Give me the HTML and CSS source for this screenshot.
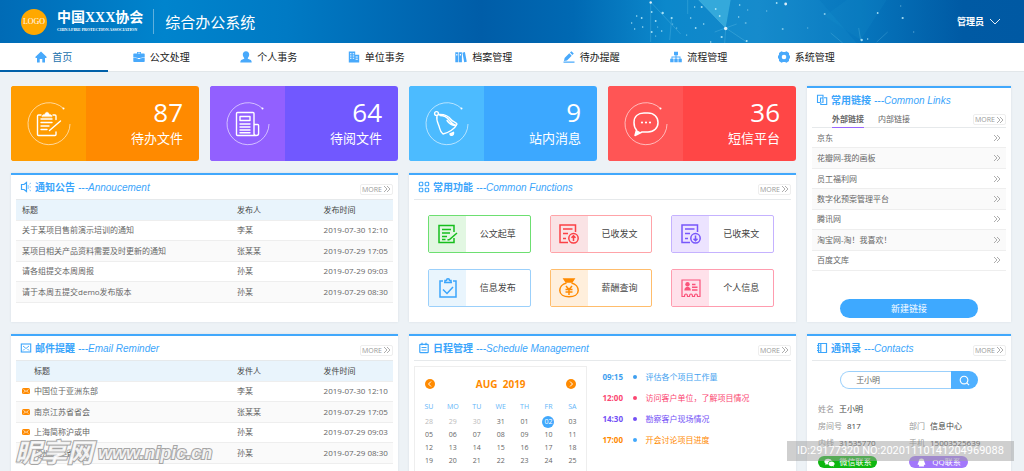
FILE: index.html
```html
<!DOCTYPE html>
<html lang="zh-CN">
<head>
<meta charset="utf-8">
<title>综合办公系统</title>
<link rel="stylesheet" href="styles.css">
</head>
<body>
<svg class="sprite" aria-hidden="true">
  <symbol id="more" viewBox="0 0 8 8"><path d="M1 1l3 3-3 3M4 1l3 3-3 3" fill="none" stroke="currentColor" stroke-width=".8"/></symbol>
  <symbol id="ring" viewBox="0 0 44 44"><path d="M36.500 6.500A21 21 0 1 0 43 22" fill="none" stroke="#fff" stroke-opacity=".75" stroke-width=".8"/><circle cx="36.500" cy="6.500" r="1" fill="#fff"/></symbol>
  <symbol id="mail" viewBox="0 0 8 6"><rect width="8" height="6" rx="1.500" fill="#ff8a00"/><path d="M1.500 1.500L4 3.500l2.500-2M1.500 4.700l1.300-1.200M6.500 4.700L5.200 3.500" fill="none" stroke="#fff" stroke-width=".7"/></symbol>
</svg>
<div class="app">
  <header class="top">
    <svg class="sky" viewBox="10 0 400 43" preserveAspectRatio="xMidYMid slice" aria-hidden="true">
      <path d="M84 0h32l-5 28z" fill="#4cc0e6" fill-opacity=".6"/>
      <path d="M116 0l-5 28 21 15h110L205 0z" fill="#29a3dc" fill-opacity=".12"/>
      <path d="M246 40l-36-24L232 0h40z" fill="#29a3dc" fill-opacity=".1"/>
      <g fill="none" stroke="#8fdcf6" stroke-opacity=".35" stroke-width=".6">
        <path d="M36 2l30 32M36 2v40M84 0l27 28M111 28l21 14M111 28l-1 15M111 28l11-4M111 28l-11 4M57 18l-2 22M216 33l12 10M246 40l-2-12M273 32l-11 10M73 0v14"/>
      </g>
      <g fill="#bfeefb" fill-opacity=".85">
        <circle cx="36" cy="2.500" r="1.200" fill="#fff"/><circle cx="37" cy="12" r=".9"/><circle cx="48" cy="13" r="1.200"/><circle cx="22" cy="16" r=".8"/><circle cx="27" cy="18" r=".9"/><circle cx="17" cy="23" r=".7"/><circle cx="5" cy="23" r=".7"/><circle cx="41" cy="21" r=".9"/><circle cx="28" cy="27" r=".8"/><circle cx="20" cy="29" r=".7"/><circle cx="37" cy="32" r="1"/><circle cx="43" cy="27" r=".5"/><circle cx="47" cy="31" r=".8"/><circle cx="41" cy="36" r=".6"/><circle cx="57" cy="18" r="1.100"/><circle cx="58" cy="24" r=".5"/><circle cx="62" cy="28" r=".6"/><circle cx="72" cy="35" r=".6"/><circle cx="76" cy="18" r=".8"/><circle cx="81" cy="28" r=".9"/><circle cx="80" cy="7" r=".7"/><circle cx="87" cy="7" r="1"/><circle cx="89" cy="24" r=".8"/><circle cx="101" cy="9" r=".9"/><circle cx="105" cy="16" r=".9"/><circle cx="111" cy="28.500" r="1.700" fill="#fff"/><circle cx="107" cy="37" r="1.100"/><circle cx="96" cy="42" r=".8"/><circle cx="125" cy="5" r=".8"/><circle cx="124" cy="17" r=".7"/><circle cx="133" cy="10" r=".7" opacity=".6"/><circle cx="131" cy="23" r="1" opacity=".5"/><circle cx="132" cy="41" r="1"/><circle cx="152" cy="11" r=".7" opacity=".6"/><circle cx="162" cy="3" r=".9"/><circle cx="171" cy="4" r="1.400" fill="#fff"/><circle cx="168" cy="29" r="1" opacity=".7"/><circle cx="193" cy="28" r=".7" opacity=".5"/><circle cx="210" cy="14" r="1" opacity=".8"/><circle cx="247" cy="40" r="1.200"/><circle cx="253" cy="39" r=".7"/><circle cx="263" cy="13" r=".9"/><circle cx="286" cy="6" r=".7" opacity=".5"/><circle cx="288" cy="18" r="1.100"/><circle cx="299" cy="32" r=".7" opacity=".5"/>
      </g>
    </svg>
    <div class="brand">
      <span class="logo">LOGO</span>
      <div class="org"><strong>中国XXX协会</strong><small>CHINA FIRE PROTECTION ASSOCIATION</small></div>
      <h1>综合办公系统</h1>
    </div>
    <button class="user" type="button">管理员
      <svg width="12" height="7" viewBox="0 0 12 7"><path d="M1 1l5 5 5-5" fill="none" stroke="#fff" stroke-width=".9"/></svg>
    </button>
  </header>

  <nav class="nav">
    <a class="on" href="#"><svg viewBox="0 0 12 12"><path d="M6 .5L.5 5.800V7H2v4.500h2.700V8h2.600v3.500H10V7h1.500V5.800z"/></svg>首页</a>
    <a href="#"><svg viewBox="0 0 12 12"><path d="M4 2.500V1h4v1.500h3q.7 0 .7.700V6L7 7H5L.3 6V3.200q0-.7.7-.7zM4.800 2.500h2.400v-.8H4.800zM.3 6.600L5 7.600v.5h2v-.5l4.700-1v3.600q0 .8-.7.800H1q-.7 0-.7-.8z"/></svg>公文处理</a>
    <a href="#"><svg viewBox="0 0 12 12"><path d="M6 .3c2 0 3.200 1.400 3.200 3.200 0 1.500-.7 2.800-1.400 3.500v.7l3 1.300q.9.500.9 2.500H.3q0-2 .9-2.500l3-1.300V7C3.500 6.300 2.800 5 2.800 3.500 2.800 1.700 4 .3 6 .3z"/></svg>个人事务</a>
    <a href="#"><svg viewBox="0 0 12 12"><path fill-rule="evenodd" d="M.8.500h6.400v3.300h4v7.700H.8zM2 2.300v1h1.500v-1zM4.700 2.300v1h1.500v-1zM2 4.500v1h1.500v-1zM4.700 4.500v1h1.500v-1zM2 6.700v1h1.500v-1zM4.700 6.700v1h1.500v-1zM7.600 5.500v1h2.200v-1zM7.600 7.700v1h2.200v-1z"/></svg>单位事务</a>
    <a href="#"><svg viewBox="0 0 12 12"><path fill-rule="evenodd" d="M.3 1.200h3v10h-3zM1.200 3h1.200v1.500H1.200zM3.900 1.200h3v10h-3zM4.800 3H6v1.500H4.800zM7.400 1.700l2.500-.6 1.900 9.600-2.600.5z"/></svg>档案管理</a>
    <a href="#"><svg viewBox="0 0 12 12"><path d="M1 10l.6-3 4.700-4.700 2.400 2.400L4 9.400zM7 1.600L8.400.300 10.800 2.600 9.400 4zM.5 10.500h11v1.300H.5z"/></svg>待办提醒</a>
    <a href="#"><svg viewBox="0 0 12 12"><path d="M4 .8h4v3.400H6.500v1.300h4v2.300h1.300v3.400H8.400V7.800h1.200V6.400H6.500v1.400h1.200v3.400H4.300V7.800h1.200V6.400H2.400v1.400h1.200v3.400H.2V7.800h1.300V5.500h4V4.200H4z"/></svg>流程管理</a>
    <a href="#"><svg viewBox="0 0 12 12"><path fill-rule="evenodd" d="M3.500.3L5 1h2L8.500.300 11 2v1.800L12 5v2l-1 1.200V10L8.500 11.700 7 11H5l-1.500.7L1 10V8.200L0 7V5l1-1.200V2zM6 3.700a2.300 2.300 0 1 0 0 4.600 2.300 2.300 0 0 0 0-4.600z"/></svg>系统管理</a>
  </nav>

  <main class="board">
    <a class="stat orange" href="#">
      <span class="pic"><svg viewBox="0 0 44 44"><use href="#ring"/><g fill="none" stroke="#fff" stroke-width="1.400" stroke-linecap="round" stroke-linejoin="round"><path d="M14 13h-2.500q-1 0-1 1v18.500q0 1 1 1h16.500q1 0 1-1V30M29 17.500V14q0-1-1-1h-2M14 17h11M14 20.500h11M14 24h8M14 27.500h6M33.500 19l-11 9.500"/><path d="M15 14.500c0-2 2-2 3-2 0-3 4-3 4 0 1 0 3 0 3 2z" fill="#fff" stroke-width=".5"/></g></svg></span>
      <span class="num"><b>87</b>待办文件</span>
    </a>
    <a class="stat purple" href="#">
      <span class="pic"><svg viewBox="0 0 44 44"><use href="#ring"/><g fill="none" stroke="#fff" stroke-width="1.400" stroke-linejoin="round" stroke-linecap="round"><path d="M30 33.500H11.500q-1 0-1-1v-21q0-1 1-1h15.500q1 0 1 1v20q0 2 2.300 2t2.300-2v-8q0-1-1-1H28M14 14.500h10v4H14zM14 22h10M14 25h10M14 28h10M14 30.700h10"/></g></svg></span>
      <span class="num"><b>64</b>待阅文件</span>
    </a>
    <a class="stat blue" href="#">
      <span class="pic"><svg viewBox="0 0 44 44"><use href="#ring"/><g fill="none" stroke="#fff" stroke-width="1.400" stroke-linejoin="round" stroke-linecap="round"><circle cx="11.500" cy="11.500" r="1.900"/><path d="M12 14c-1 4 1 7 2 10 1 3 1 6 4 8 5-1 12-5 14-10-1-2-4-2-5.500-4-3-4-6-6-13-5.500"/><path d="M15 13.500c6 0 8 3 9.500 5 2 3 4 4 6.500 5-4 0-7-2-9-5"/><path d="M25 32l3.500-1.700q.3 2.500-1.500 3-1.700.200-2-1.300z" fill="#fff"/></g></svg></span>
      <span class="num"><b>9</b>站内消息</span>
    </a>
    <a class="stat red" href="#">
      <span class="pic"><svg viewBox="0 0 44 44"><use href="#ring"/><path d="M12.500 28c-2-2-2.500-4-2.500-7.500 0-6 4-9.500 10-9.500h4c6 0 10 4 10 9.500S30 30 24 30h-6l-7 3.500z" fill="none" stroke="#fff" stroke-width="1.500" stroke-linejoin="round"/><path d="M11 33.500l1.500-5.500 4.500 2.500z" fill="#fff"/><g fill="#fff"><circle cx="18" cy="20.500" r="1.100"/><circle cx="22" cy="20.500" r="1.100"/><circle cx="26" cy="20.500" r="1.100"/></g></svg></span>
      <span class="num"><b>36</b>短信平台</span>
    </a>

    <section class="panel links">
      <div class="title"><svg viewBox="0 0 12 12"><g fill="none" stroke="currentColor" stroke-width="1.100"><path d="M4 8.500H1.500V1.200h5.500v2.600M4.500 8.500V4H7v4.300H5.500"/><path d="M8 3.800h2.700v6.700H4.800V8.700"/></g></svg><h2>常用链接</h2><i>---Common Links</i></div>
      <div class="tabs"><button class="on" type="button">外部链接</button><button type="button">内部链接</button><a class="more" href="#">MORE <svg><use href="#more"/></svg></a></div>
      <ul>
        <li><a href="#">京东<svg><use href="#more"/></svg></a></li>
        <li><a href="#">花瓣网-我的画板<svg><use href="#more"/></svg></a></li>
        <li><a href="#">员工福利网<svg><use href="#more"/></svg></a></li>
        <li><a href="#">数字化预案管理平台<svg><use href="#more"/></svg></a></li>
        <li><a href="#">腾讯网<svg><use href="#more"/></svg></a></li>
        <li><a href="#">淘宝网-淘！我喜欢！<svg><use href="#more"/></svg></a></li>
        <li><a href="#">百度文库<svg><use href="#more"/></svg></a></li>
      </ul>
      <button class="create" type="button">新建链接</button>
    </section>

    <section class="panel wide">
      <div class="title ruled"><svg viewBox="0 0 12 12"><g fill="none" stroke="currentColor" stroke-width="1.200"><path d="M6.500 1.500L4 3.500H1.500v5H4l2.500 2z"/><path d="M8.200 4v4M9.500 3l1.500-1M9.500 6H11M9.500 9l1.500 1" stroke-width=".6"/></g></svg><h2>通知公告</h2><i>---Annoucement</i><a class="more" href="#">MORE <svg><use href="#more"/></svg></a></div>
      <table class="list">
        <thead><tr><th>标题</th><th>发布人</th><th>发布时间</th></tr></thead>
        <tbody>
          <tr><td>关于某项目售前演示培训的通知</td><td>李某</td><td>2019-07-30 12:10</td></tr>
          <tr><td>某项目相关产品资料需要及时更新的通知</td><td>张某某</td><td>2019-07-29 17:05</td></tr>
          <tr><td>请各组提交本周周报</td><td>孙某</td><td>2019-07-29 09:03</td></tr>
          <tr><td>请于本周五提交demo发布版本</td><td>孙某</td><td>2019-07-29 08:30</td></tr>
        </tbody>
      </table>
    </section>

    <section class="panel wide">
      <div class="title ruled"><svg viewBox="0 0 12 12"><g fill="none" stroke="currentColor" stroke-width="1.100"><rect x="1.300" y="1.300" width="3.500" height="3.500" rx=".8"/><rect x="7.200" y="1.300" width="3.500" height="3.500" rx=".8"/><rect x="1.300" y="7.200" width="3.500" height="3.500" rx=".8"/><rect x="7.200" y="7.200" width="3.500" height="3.500" rx=".8"/></g></svg><h2>常用功能</h2><i>---Common Functions</i><a class="more" href="#">MORE <svg><use href="#more"/></svg></a></div>
      <div class="tools">
        <button class="green" type="button"><span><svg viewBox="0 0 20 20"><path d="M16 8V1.500H1v17h15V14M4 5.500h9M4 9h8M4 12.500h5M4 15.500h3.500M19 9l-7.500 6.500-2 .5"/></svg></span>公文起草</button>
        <button class="rose" type="button"><span><svg viewBox="0 0 20 20"><path d="M16.500 8V1H1v17.500h8M4 5h9.500M4 9.500h5M4 14.500h3"/><circle cx="14.500" cy="14.300" r="4.700"/><path d="M14.500 17v-5M12.500 13.800l2-2 2 2"/></svg></span>已收发文</button>
        <button class="violet" type="button"><span><svg viewBox="0 0 20 20"><path d="M16.500 8V1H1v17.500h8M4 5h9.500M4 9.500h5M4 14.500h3"/><circle cx="14.500" cy="14.300" r="4.700"/><path d="M14.500 11.500v5M12.500 14.800l2 2 2-2"/></svg></span>已收来文</button>
        <button class="azure" type="button"><span><svg viewBox="0 0 20 20"><path d="M5 3H2v16h16V3h-3M6 4.500h8M5 11.500l4 4 6-6.500"/><path d="M7 4V2.500h1.500c0-2.300 3-2.300 3 0H13V4"/></svg></span>信息发布</button>
        <button class="amber" type="button"><span><svg viewBox="0 0 20 20"><path d="M7.500 5C3 6 .8 9.500.8 12.500c0 4 4 6.300 9.200 6.300s9.200-2.300 9.200-6.300c0-3-2.200-6.500-6.700-7.500"/><path d="M5 1h10l-2 3H7z" fill="currentColor"/><path d="M7 8l3 3.500L13 8M6.500 11.500h7M6.500 14h7M10 11.500V17"/></svg></span>薪酬查询</button>
        <button class="pink" type="button"><span><svg viewBox="0 0 20 20"><path d="M1 18.500V2h18v16.500h-2.500q0-2.500-1.500-2.500t-1.500 2.500h-2q0-2.500-1.500-2.500t-1.500 2.500h-2q0-2.500-1.500-2.500t-1.500 2.500z" stroke-width="1.200"/><circle cx="6.500" cy="6.300" r="2.200" fill="currentColor" stroke="none"/><path d="M3.300 12.500c0-5 6.500-5 6.500 0z" fill="currentColor" stroke="none"/><path d="M11 6.500h3.500M11 9.200h5.500M11 12h5.500"/></svg></span>个人信息</button>
      </div>
    </section>

    <section class="panel wide">
      <div class="title ruled"><svg viewBox="0 0 12 12"><g fill="none" stroke="currentColor" stroke-width="1.100"><rect x="1.300" y="2" width="9.400" height="8"/><path d="M3 4l3 2.500L9 4M3 8.500l1.500-1.500M9 8.500L7.500 7" stroke-width=".9"/></g></svg><h2>邮件提醒</h2><i>---Email Reminder</i><a class="more" href="#">MORE <svg><use href="#more"/></svg></a></div>
      <table class="list mails">
        <thead><tr><th>标题</th><th>发件人</th><th>发件时间</th></tr></thead>
        <tbody>
          <tr><td><svg><use href="#mail"/></svg>中国位于亚洲东部</td><td>李某</td><td>2019-07-30 12:10</td></tr>
          <tr><td><svg><use href="#mail"/></svg>南京江苏省省会</td><td>张某某</td><td>2019-07-29 17:05</td></tr>
          <tr><td><svg><use href="#mail"/></svg>上海简称沪或申</td><td>孙某</td><td>2019-07-29 09:03</td></tr>
          <tr><td><svg><use href="#mail"/></svg>杭州浙江省省会</td><td>孙某</td><td>2019-07-29 08:30</td></tr>
        </tbody>
      </table>
    </section>

    <section class="panel wide">
      <div class="title ruled"><svg viewBox="0 0 12 12"><g fill="none" stroke="currentColor" stroke-width="1.200"><rect x="1.800" y="2.300" width="8.400" height="8.400" rx=".8"/><path d="M4 .8v2.500M8 .8v2.500M3.500 5.500h5M3.500 8h5"/></g></svg><h2>日程管理</h2><i>---Schedule Management</i><a class="more" href="#">MORE <svg><use href="#more"/></svg></a></div>
      <div class="plan">
        <div class="calendar">
          <div class="month">
            <button type="button" aria-label="上月"><svg viewBox="0 0 10 10"><path d="M6 2.500L3.500 5 6 7.500"/></svg></button>
            <strong>AUG&nbsp; 2019</strong>
            <button type="button" aria-label="下月"><svg viewBox="0 0 10 10"><path d="M4 2.500L6.500 5 4 7.500"/></svg></button>
          </div>
          <table>
            <thead><tr><th>SU</th><th>MO</th><th>TU</th><th>WE</th><th>TH</th><th>FR</th><th>SA</th></tr></thead>
            <tbody>
              <tr><td class="off">28</td><td class="off">29</td><td class="off">30</td><td>31</td><td>01</td><td><span class="today">02</span></td><td>03</td></tr>
              <tr><td>05</td><td>06</td><td>07</td><td>08</td><td>09</td><td>10</td><td>11</td></tr>
              <tr><td>12</td><td>13</td><td>14</td><td>15</td><td>16</td><td>17</td><td>18</td></tr>
              <tr><td>19</td><td>20</td><td>21</td><td>22</td><td>23</td><td>24</td><td>25</td></tr>
              <tr><td>26</td><td>27</td><td>28</td><td>29</td><td>30</td><td>31</td><td class="off">01</td></tr>
            </tbody>
          </table>
        </div>
        <ol class="agenda">
          <li class="c-blue"><time>09:15</time><span>评估各个项目工作量</span></li>
          <li class="c-pink"><time>12:00</time><span>访问客户单位，了解项目情况</span></li>
          <li class="c-violet"><time>14:30</time><span>勘察客户现场情况</span></li>
          <li class="c-orange"><time>17:00</time><span>开会讨论项目进度</span></li>
        </ol>
      </div>
    </section>

    <section class="panel">
      <div class="title ruled"><svg viewBox="0 0 12 12"><g fill="none" stroke="currentColor" stroke-width="1.200"><path d="M2.500 1.500h8v9h-8zM4.800 1.500v9"/><path d="M1 3.500h2.500M1 6h2.500M1 8.500h2.500"/></g></svg><h2>通讯录</h2><i>---Contacts</i><a class="more" href="#">MORE <svg><use href="#more"/></svg></a></div>
      <form class="search">
        <input type="text" value="王小明" aria-label="搜索联系人">
        <button type="button" aria-label="搜索"><svg viewBox="0 0 12 12"><circle cx="5.500" cy="5.500" r="4.200"/><path d="M8.500 8.500L11 11"/></svg></button>
      </form>
      <dl class="card">
        <div class="full"><dt>姓名</dt><dd>王小明</dd></div>
        <div><dt>房间号</dt><dd>817</dd></div>
        <div><dt>部门</dt><dd>信息中心</dd></div>
        <div><dt>内线</dt><dd>31535770</dd></div>
        <div><dt>手机</dt><dd>15003525639</dd></div>
      </dl>
      <div class="chat">
        <button class="wechat" type="button"><svg viewBox="0 0 12 10"><path d="M4.500.8C2 .8.300 2.200.3 4c0 1 .6 1.800 1.400 2.400L1.400 8l1.500-1 1.400.2C4 4.500 6 3 8.500 3.200 8.200 1.800 6.500.8 4.500.8zM8.300 3.800c-2 0-3.500 1.200-3.500 2.700s1.500 2.700 3.500 2.700l1.200-.2 1.300.8-.3-1.300c.8-.5 1.200-1.200 1.200-2 0-1.500-1.500-2.700-3.400-2.700z"/></svg>微信联系</button>
        <button class="qq" type="button"><svg viewBox="0 0 12 10"><path d="M6 .5c2 0 3 1.300 3 3 0 1 1.400 2.300 1.200 4-.1.400-.6.200-1-.4l-.7 1.200c.8.400.6 1.200-.5 1.200H4c-1.100 0-1.300-.8-.5-1.200l-.7-1.200c-.4.600-.9.800-1 .4C1.600 5.800 3 4.500 3 3.500c0-1.700 1-3 3-3z"/></svg>QQ联系</button>
      </div>
    </section>
  </main>

  <div class="stamp-left"><span>昵享网</span><em>www.nipic.cn</em></div>
  <div class="stamp-right">ID:29177320 NO:20201110141204969088</div>
</div>
</body>
</html>
```
FILE: styles.css
```css
* { box-sizing: border-box; }

body {
  margin: 0;
  background: #edf2f6;
  color: #666;
  font: 8px/12px "Open Sans", "Noto Sans CJK SC", sans-serif;
}

a { color: inherit; text-decoration: none; }
button, input { margin: 0; padding: 0; border: 0; background: none; color: inherit; font: inherit; }
h1, h2, ul, ol, dl, dd { margin: 0; padding: 0; list-style: none; }
svg { display: block; flex: none; }
.sprite { position: absolute; width: 0; height: 0; }

.app { position: relative; height: 100vh; overflow: hidden; }

/* Header */
.top {
  position: relative;
  display: flex;
  align-items: center;
  justify-content: space-between;
  height: 43px;
  padding: 0 23px 0 21px;
  color: #fff;
  background: linear-gradient(90deg, #006bb6 0%, #0084cd 16%, #007ac4 28%, #005da8 47%, #0069b3 56%, #0c88cb 65%, #1488ca 74%, #0676bd 84%, #005aa4 94%, #0059a3 100%);
}
.sky { position: absolute; top: 0; left: 61%; width: 39%; height: 100%; }
.brand { position: relative; display: flex; align-items: center; }
.logo {
  width: 26px; height: 26px; border-radius: 50%;
  background: #ffa800;
  font: 8px/26px "Liberation Serif", serif;
  text-align: center;
}
.org { margin-left: 10px; padding-right: 10px; border-right: 1px solid #5fb0dd; height: 25px; }
.org strong { display: block; font: bold 14px/17px "Liberation Serif", "Noto Sans CJK SC", serif; }
.org small { display: block; font: bold 4px/8px "Liberation Serif", serif; white-space: nowrap; }
.brand h1 { margin-left: 11px; font-size: 15px; line-height: 24px; font-weight: 400; }
.user { position: relative; display: flex; align-items: center; gap: 5px; font-size: 9px; font-weight: 700; }

/* Navigation */
.nav {
  display: grid;
  grid-template-columns: repeat(8, 10.5%);
  height: 29px;
  background: #fff;
  border-bottom: 1px solid #e2e7ea;
  color: #222;
  font-size: 10px;
}
.nav a { display: flex; align-items: center; justify-content: center; gap: 5px; height: 29px; border-bottom: 2px solid transparent; }
.nav svg { width: 12px; height: 12px; fill: #48a9fb; }
.nav .on { color: #2372ad; border-color: #0060a9; }

/* Board */
.board {
  display: grid;
  grid-template-columns: repeat(4, 188fr) 204fr;
  grid-template-rows: 75px 149px auto;
  gap: 12px 11px;
  padding: 14px 13px 0 11px;
}

.stat { display: flex; border-radius: 3px; overflow: hidden; color: #fff; }
.pic { display: grid; place-items: center; width: 40%; }
.pic svg { width: 44px; height: 44px; }
.num { flex: 1; padding: 10px 16px 0 0; text-align: right; font-size: 13px; line-height: 20px; }
.num b { display: block; font-size: 26px; line-height: 32px; font-weight: 400; }
.orange { background: #ff8a00; }
.orange .pic { background: #ff9c00; }
.purple { background: #7158ff; }
.purple .pic { background: #9260ff; }
.blue { background: #3ca8ff; }
.blue .pic { background: #4cbbff; }
.red { background: #ff4646; }
.red .pic { background: #ff5555; }

.panel {
  display: flex;
  flex-direction: column;
  min-width: 0;
  padding: 0 5px;
  background: #fff;
  border-top: 2px solid #41a8fc;
  box-shadow: 0 0 2px #d5dde3;
}
.wide { grid-column: span 2; }
.links { grid-column: 5; grid-row: 1 / span 2; }

.title { display: flex; align-items: center; flex: none; height: 24px; padding-left: 4px; color: #3ba5fb; }
.title > svg { width: 12px; height: 12px; }
.title h2 { margin-left: 3px; font-size: 10px; line-height: 16px; font-weight: 700; }
.title i { margin-left: 3px; padding-top: 2px; font: italic 10px/14px "Liberation Sans", sans-serif; white-space: nowrap; }
.ruled { height: 25px; border-bottom: 1px solid #e6e9eb; }
.more {
  display: flex; align-items: center; gap: 1px;
  height: 11px; margin: 4px 0 0 auto; padding: 0 1px;
  border: 1px solid #eee; border-radius: 2px;
  color: #999; font-size: 7px; line-height: 9px;
}
.more svg, .links li svg { width: 8px; height: 8px; }

/* Tables */
.list { width: 100%; border-collapse: collapse; table-layout: fixed; }
.list tr { height: 20px; }
.list th, .list td { padding: 0 0 0 6px; text-align: left; font-weight: 400; white-space: nowrap; border-bottom: 1px solid #eee; }
.list th { width: 57%; background: #e9f4fc; color: #444; }
.list th:nth-child(2) { width: 23%; }
.list th:nth-child(3) { width: 20%; }
.list tbody tr:nth-child(even) { height: 21px; background: #fafafa; }
.mails th:first-child { padding-left: 18px; }
.mails td svg { display: inline-block; width: 8px; height: 6px; margin-right: 4px; }
.mails { margin-bottom: 20px; }

/* Links */
.tabs { display: flex; align-items: center; flex: none; gap: 14px; height: 16px; padding-left: 20px; border-bottom: 1px solid #e6e9eb; }
.tabs button { height: 16px; border-bottom: 1px solid transparent; }
.tabs .on { font-weight: 700; border-color: #9a67ff; }
.tabs .more { margin-top: 0; }
.links ul { display: grid; grid-auto-rows: 1fr; height: 143px; }
.links li { border-bottom: 1px solid #eee; }
.links li:nth-child(even) { background: #fafafa; }
.links li a { display: flex; align-items: center; justify-content: space-between; height: 100%; padding: 0 5px; }
.links li svg { color: #999; }
.create { width: 71%; height: 19px; margin: auto auto 4px; border-radius: 10px; background: #3ea9ff; color: #fff; font-size: 9px; }

/* Function buttons */
.tools { display: grid; grid-template-columns: repeat(3, 1fr); gap: 16px 19px; padding: 15px 17px 0 14px; }
.tools button { display: flex; align-items: center; height: 38px; border: 1px solid; border-radius: 2px; color: #444; font-size: 9px; }
.tools span { display: grid; place-items: center; width: 37px; height: 36px; margin-right: auto; }
.tools button::after { content: ""; margin-right: auto; }
.tools svg { width: 20px; height: 20px; fill: none; stroke: currentColor; stroke-width: 1.5; }
.tools .green { border-color: #6ddf71; }
.green span { background: #e2f7e2; color: #16bf1c; }
.tools .rose { border-color: #ffa3a8; }
.rose span { background: #fae3e5; color: #fb4146; }
.tools .violet { border-color: #c5b2ff; }
.violet span { background: #ece3ff; color: #7757fb; }
.tools .azure { border-color: #9bd0fb; }
.azure span { background: #e9f5fd; color: #3ba5fb; }
.tools .amber { border-color: #ffbd6c; }
.amber span { background: #ffefdc; color: #ff8a00; }
.tools .pink { border-color: #ff9caf; }
.pink span { background: #ffe1ea; color: #fb537a; }

/* Schedule */
.plan { display: flex; padding-top: 5px; }
.calendar { width: 46%; padding: 0 2px; border: 1px solid #eee; }
.month { display: flex; align-items: center; justify-content: space-between; height: 34px; padding: 0 8px; color: #ff8a00; font-size: 10px; }
.month button { width: 10px; height: 10px; border-radius: 50%; background: #ff8a00; }
.month svg { fill: none; stroke: #fff; }
.calendar table { width: 100%; border-collapse: collapse; table-layout: fixed; font-size: 7px; line-height: 12px; text-align: center; }
.calendar th { height: 14px; padding: 0 0 4px; color: #63b5f8; font-weight: 400; line-height: 9px; }
.calendar td { height: 13px; padding: 0; }
.calendar .off { color: #bbb; }
.today { display: block; width: 12px; height: 12px; margin: auto; border-radius: 50%; background: #41a8fc; color: #fff; }
.agenda { flex: 1; padding-left: 15px; }
.agenda li { display: flex; align-items: center; height: 21px; }
.agenda time { width: 31px; font-weight: 700; }
.agenda span { display: flex; align-items: center; gap: 8px; white-space: nowrap; }
.agenda span::before { content: ""; width: 4px; height: 4px; border-radius: 50%; background: currentColor; }
.agenda .c-blue { color: #3f9fef; }
.agenda .c-pink { color: #fb4671; }
.agenda .c-violet { color: #7350f6; }
.agenda .c-orange { color: #ff8a00; }
.c-orange span::before { background: #41a8fc; }

/* Contacts */
.search { display: flex; flex: none; width: 71%; height: 18px; margin: 10px auto 11px; }
.search input { flex: 1; min-width: 0; padding-left: 15px; border: 1px solid #9bd0fb; border-right: 0; border-radius: 9px 0 0 9px; }
.search button { display: grid; place-items: center; width: 27px; border-radius: 0 9px 9px 0; background: #4fb0ff; }
.search svg { width: 11px; height: 11px; fill: none; stroke: #fff; stroke-width: 1.2; }
.card, .chat { display: grid; grid-template-columns: 1fr 1fr; padding: 0 6px; }
.card div { display: flex; align-items: center; gap: 5px; height: 17px; white-space: nowrap; }
.card .full { grid-column: 1 / -1; }
.card dt { color: #999; }
.card dd { color: #444; }
.chat { padding-top: 5px; }
.chat button { display: flex; align-items: center; justify-content: center; gap: 5px; width: 65%; height: 12px; border-radius: 6px; color: #fff; }
.chat svg { width: 11px; height: 9px; fill: #fff; }
.wechat { background: #0db70f; }
.qq { background: #a277fb; }

/* Stamps laid over the page */
.stamp-left {
  position: absolute; left: 15px; bottom: 6px;
  display: flex; align-items: center; gap: 5px;
  color: rgba(255, 255, 255, .85);
  font: italic bold 18px/24px "Liberation Sans", "Noto Sans CJK SC", sans-serif;
  -webkit-text-stroke: 2px #a5a5a5;
  paint-order: stroke fill;
}
.stamp-left span { font-size: 26px; }
.stamp-right {
  position: absolute; right: 10px; bottom: 10px;
  width: 227px; height: 20px;
  background: rgba(160, 160, 160, .5);
  color: #fff;
  font: 11px/20px Roboto, sans-serif;
  text-align: center;
}
```
